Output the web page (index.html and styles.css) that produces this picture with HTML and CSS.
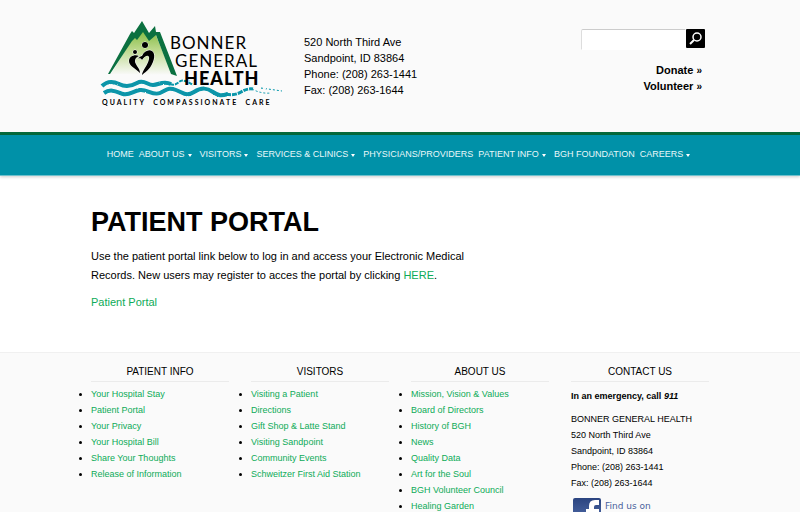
FILE: index.html
```html
<!DOCTYPE html>
<html lang="en">
<head>
<meta charset="utf-8">
<meta name="viewport" content="width=device-width, initial-scale=1">
<title>Patient Portal | Bonner General Health</title>
<link rel="stylesheet" href="styles.css">
</head>
<body>
<header class="masthead">
  <div class="wrap masthead-row">
    <a class="logo" href="#" aria-label="Bonner General Health">
      <svg width="184" height="92" viewBox="0 0 184 92">
        <defs>
          <linearGradient id="hill" x1="0" y1="0" x2="0" y2="1">
            <stop offset="0" stop-color="#7fb93c"/>
            <stop offset="0.45" stop-color="#bcd98c"/>
            <stop offset="1" stop-color="#fafafa"/>
          </linearGradient>
          <filter id="brush" x="-5%" y="-20%" width="110%" height="140%">
            <feTurbulence type="fractalNoise" baseFrequency="0.5" numOctaves="1" seed="4"/>
            <feDisplacementMap in="SourceGraphic" scale="2" xChannelSelector="R" yChannelSelector="G"/>
          </filter>
        </defs>
        <path d="M12 54 33 19 44 9 50 18 56 13 73 55Z" fill="url(#hill)"/>
        <path d="M9 54 31 14 33 11 35 13 43 1 50 13 56 6 57 12 61 12 78 56 72 54 57 15 50 21 44 12 38 20 36 18 33 21 11 54Z" fill="#0b7040"/>
        <g fill="#000" stroke="#fff" stroke-width="1" paint-order="stroke">
          <circle cx="46" cy="25" r="3"/>
          <circle cx="36" cy="32" r="2"/>
          <path d="M40 36C36 34 30 36 30 41C30 46 36 48 41 53C41 48 36 45 36 41C36 38 38 37 40 36Z"/>
          <path d="M43 36C45 31 50 29 53 31C57 34 55 41 52 46C49 51 46 52 43 55C43 51 49 45 50 39C51 35 47 34 43 40C42 38 40 38 39 39C40 37 42 36 43 36Z"/>
        </g>
        <g fill="none" stroke="#0795a9" filter="url(#brush)">
          <path stroke-width="4" d="M3 66C8 61 14 61 20 64S31 67 38 63 48 65 54 65 64 60 72 64"/>
          <path stroke-width="2" stroke-dasharray="4 1" d="M71 64Q76 66 80 62T94 65"/>
          <path stroke-width="4" d="M5 73C12 68 18 72 24 74S34 71 41 70 54 76 61 73 69 67 77 70 87 77 95 72 108 68 114 72 122 76 129 74"/>
          <path stroke-width="3" stroke-dasharray="5 1" d="M127 74Q135 76 142 72T154 69"/>
          <path stroke-width="1" stroke-dasharray="2 2" d="M153 69Q162 74 172 73M162 68 183 71"/>
        </g>
        <g class="logo-name">
          <text x="71" y="29">BONNER</text>
          <text x="76" y="47">GENERAL</text>
          <text x="85" y="65" class="logo-strong">HEALTH</text>
        </g>
        <text x="3" y="85" class="logo-tag">QUALITY &#160;COMPASSIONATE &#160;CARE</text>
      </svg>
    </a>
    <address class="address">520 North Third Ave<br>Sandpoint, ID 83864<br>Phone: (208) 263-1441<br>Fax: (208) 263-1644</address>
    <div class="tools">
      <form class="search">
        <input type="search" aria-label="Search">
        <button type="button" aria-label="Search">
          <svg width="15" height="15" viewBox="0 0 15 15" fill="none" stroke="#fff">
            <circle cx="9" cy="6" r="4" stroke-width="1.500"/>
            <path d="M6 9 2 13" stroke-width="2"/>
          </svg>
        </button>
      </form>
      <a href="#">Donate <span>»</span></a>
      <a href="#">Volunteer <span>»</span></a>
    </div>
  </div>
</header>
<nav class="nav">
  <ul>
    <li><a href="#">HOME</a></li>
    <li><a href="#" class="more">ABOUT US</a></li>
    <li><a href="#" class="more">VISITORS</a></li>
    <li><a href="#" class="more">SERVICES &amp; CLINICS</a></li>
    <li><a href="#">PHYSICIANS/PROVIDERS</a></li>
    <li><a href="#" class="more">PATIENT INFO</a></li>
    <li><a href="#">BGH FOUNDATION</a></li>
    <li><a href="#" class="more">CAREERS</a></li>
  </ul>
</nav>
<main class="wrap content">
  <h1>PATIENT PORTAL</h1>
  <p>Use the patient portal link below to log in and access your Electronic Medical Records. New users may register to acces the portal by clicking <a href="#">HERE</a>.</p>
  <p><a href="#">Patient Portal</a></p>
</main>
<footer class="footer">
  <div class="wrap columns">
    <section>
      <h2>PATIENT INFO</h2>
      <ul>
        <li><a href="#">Your Hospital Stay</a></li>
        <li><a href="#">Patient Portal</a></li>
        <li><a href="#">Your Privacy</a></li>
        <li><a href="#">Your Hospital Bill</a></li>
        <li><a href="#">Share Your Thoughts</a></li>
        <li><a href="#">Release of Information</a></li>
      </ul>
    </section>
    <section>
      <h2>VISITORS</h2>
      <ul>
        <li><a href="#">Visiting a Patient</a></li>
        <li><a href="#">Directions</a></li>
        <li><a href="#">Gift Shop &amp; Latte Stand</a></li>
        <li><a href="#">Visiting Sandpoint</a></li>
        <li><a href="#">Community Events</a></li>
        <li><a href="#">Schweitzer First Aid Station</a></li>
      </ul>
    </section>
    <section>
      <h2>ABOUT US</h2>
      <ul>
        <li><a href="#">Mission, Vision &amp; Values</a></li>
        <li><a href="#">Board of Directors</a></li>
        <li><a href="#">History of BGH</a></li>
        <li><a href="#">News</a></li>
        <li><a href="#">Quality Data</a></li>
        <li><a href="#">Art for the Soul</a></li>
        <li><a href="#">BGH Volunteer Council</a></li>
        <li><a href="#">Healing Garden</a></li>
      </ul>
    </section>
    <section class="contact">
      <h2>CONTACT US</h2>
      <p class="urgent">In an emergency, call <em>911</em></p>
      <p>BONNER GENERAL HEALTH<br>520 North Third Ave<br>Sandpoint, ID 83864<br>Phone: (208) 263-1441<br>Fax: (208) 263-1644</p>
      <a class="facebook" href="#">
        <svg width="28" height="28" viewBox="0 0 28 28">
          <defs><linearGradient id="fb" x1="0" y1="0" x2="0" y2="1"><stop offset="0" stop-color="#2b4480"/><stop offset="1" stop-color="#5673b0"/></linearGradient></defs>
          <rect width="28" height="28" rx="2" fill="url(#fb)"/>
          <path d="M16 28V16H13V11H16V8Q16 2 22 2H26V7H23Q21 7 21 9V11H26V16H21V28Z" fill="#fff"/>
        </svg>
        <span>Find us on</span>
      </a>
    </section>
  </div>
</footer>
</body>
</html>
```
FILE: styles.css
```css
* { box-sizing: border-box; }

body {
  margin: 0;
  background: #fff;
  color: #000;
  font: 11px/16px "Liberation Sans", Arial, sans-serif;
}

a { color: #0dab58; text-decoration: none; }

ul { margin: 0; padding: 0; }

.wrap {
  max-width: 640px;
  margin: 0 auto;
  padding: 0 11px;
}

.masthead {
  background: #fafafa;
  border-bottom: 3px solid #05693b;
}

.masthead-row {
  display: flex;
  align-items: flex-start;
  padding-top: 20px;
  padding-bottom: 20px;
}

.logo { margin-left: 8px; }

.logo svg { display: block; }

.logo-name {
  font: 17px "Lato", sans-serif;
  letter-spacing: 1px;
}

.logo-strong {
  font-size: 18px;
  font-weight: 900;
}

.logo-tag {
  font: bold 7px "Lato", sans-serif;
  letter-spacing: 2px;
}

.address {
  margin: 14px 0 0 21px;
  font-style: normal;
}

.tools {
  display: flex;
  flex-direction: column;
  align-items: flex-end;
  margin: 9px 4px 0 auto;
}

.search {
  display: flex;
  align-items: flex-start;
  margin-bottom: 12px;
}

.search input {
  width: 105px;
  height: 21px;
  padding: 2px 4px;
  border: 1px solid #ddd;
  border-color: #ccc #fff #fff #ddd;
  border-radius: 2px 0 0 0;
  background: #fff;
  font: inherit;
}

.search button {
  display: grid;
  place-items: center;
  width: 19px;
  height: 19px;
  padding: 0;
  border: 0;
  border-radius: 1px;
  background: #000;
}

.tools > a {
  height: 16px;
  margin-right: 3px;
  color: #000;
  font-weight: bold;
}

.tools span { font-size: 10px; }

.nav {
  background: #0091a8;
  border-bottom: 1px solid #6fc0cc;
  box-shadow: 0 1px 3px #0003;
}

.nav ul {
  display: flex;
  flex-wrap: wrap;
  justify-content: center;
  gap: 0 5px;
  padding: 11px 0 13px;
  list-style: none;
}

.nav a {
  display: flex;
  align-items: center;
  color: #e8f8fa;
  font-size: 9px;
}

.more::after {
  content: "";
  margin: 2px 3px 0 3px;
  border: 2px solid transparent;
  border-top: 3px solid #fff;
  border-bottom: 0;
}

.content { padding-top: 28px; padding-bottom: 32px; }

.content h1 {
  margin: 0 0 7px;
  font-size: 27px;
  line-height: 36px;
}

.content p {
  max-width: 380px;
  margin: 0 0 8px;
  line-height: 19px;
}

.footer {
  background: #fafafa;
  border-top: 1px solid #f0f0f0;
  font-size: 9px;
}

.columns {
  display: grid;
  grid-template-columns: repeat(4, 1fr);
  gap: 22px;
  padding-top: 11px;
  padding-bottom: 24px;
}

.columns h2 {
  margin: 0 0 4px;
  padding-bottom: 1px;
  border-bottom: 1px solid #ebebeb;
  font-size: 10px;
  font-weight: normal;
  text-align: center;
}

.contact p { margin: 0 0 7px; }

.contact .urgent {
  padding-top: 2px;
  font-weight: bold;
}

.facebook {
  display: flex;
  gap: 4px;
  padding-left: 2px;
  color: #48619a;
  font-family: "DejaVu Sans", Verdana, sans-serif;
}
```
